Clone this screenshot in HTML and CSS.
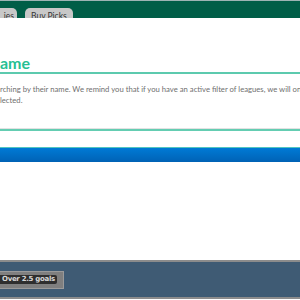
FILE: index.html
```html
<!DOCTYPE html>
<html>
<head>
<meta charset="utf-8">
<link rel="stylesheet" href="styles.css">
</head>
<body>
<div class="page">
  <div class="topbar">
    <div class="tab tab-first">ies</div>
    <div class="tab tab-second">Buy Picks</div>
  </div>
  <div class="content">
    <h1 class="title">ame</h1>
    <div class="rule-top"></div>
    <p class="desc"><span class="line">rching by their name. We remind you that if you have an active filter of leagues, we will only</span><span class="line">lected.</span></p>
    <div class="rule-bottom"></div>
    <div class="bluebar"></div>
  </div>
  <div class="footer">
    <div class="chip"><span class="chip-label">Over 2.5 goals</span></div>
  </div>
</div>
</body>
</html>
```
FILE: styles.css
```css
html, body {
  margin: 0;
  padding: 0;
  background: #ffffff;
}
.page {
  width: 300px;
  height: 300px;
  overflow: hidden;
  display: flex;
  flex-direction: column;
  font-family: Lato, "Open Sans", sans-serif;
}
.topbar {
  height: 17px;
  border-top: 1px solid #9db4b4;
  background: #005e47;
  display: flex;
  align-items: flex-end;
  gap: 8px;
  flex-shrink: 0;
}
.tab {
  height: 10px;
  background: #c8c8c8;
  border-radius: 5px 5px 0 0;
  font-size: 8.5px;
  line-height: 17px;
  color: #333;
  overflow: hidden;
  box-sizing: border-box;
}
.tab-first {
  width: 17px;
  text-align: right;
  padding-right: 3px;
  border-radius: 0 5px 0 0;
}
.tab-second {
  width: 48px;
  padding-left: 6px;
}
.content {
  display: flex;
  flex-direction: column;
  flex-shrink: 0;
}
.title {
  margin: 36px 0 0 0;
  font-size: 16px;
  line-height: 17px;
  height: 17px;
  font-weight: 700;
  color: #27bf93;
}
.rule-top {
  margin-top: 1px;
  height: 2px;
  background: #5ccaae;
}
.desc {
  margin: 10px 0 0 0;
  display: flex;
  flex-direction: column;
  font-size: 7.7px;
  line-height: 11px;
  color: #6f6f6f;
}
.line {
  white-space: nowrap;
}
.rule-bottom {
  margin-top: 22px;
  height: 2px;
  background: #64cdb2;
  border-top: 1px solid #e2e2e2;
}
.bluebar {
  margin-top: 16px;
  height: 14px;
  border-top: 1px solid #52c5c0;
  background: linear-gradient(#007ad5, #0062b5);
}
.footer {
  margin-top: 98px;
  height: 35px;
  border-top: 2px solid #8c8c8c;
  border-bottom: 2px solid #8c8c8c;
  background: #3f5b74;
  display: flex;
  align-items: center;
  flex-shrink: 0;
}
.chip {
  width: 64px;
  height: 18px;
  box-sizing: border-box;
  background: #7f7f7f;
  border: 1px solid #9a9a9a;
  border-left: none;
  display: flex;
  align-items: center;
}
.chip-label {
  background: #2e2e2e;
  color: #d8d8d8;
  font-family: "DejaVu Sans", sans-serif;
  font-weight: 700;
  font-size: 7px;
  line-height: 9px;
  padding: 0 2px 0 2px;
  border-radius: 0 2px 2px 0;
  letter-spacing: -0.3px;
}
```
